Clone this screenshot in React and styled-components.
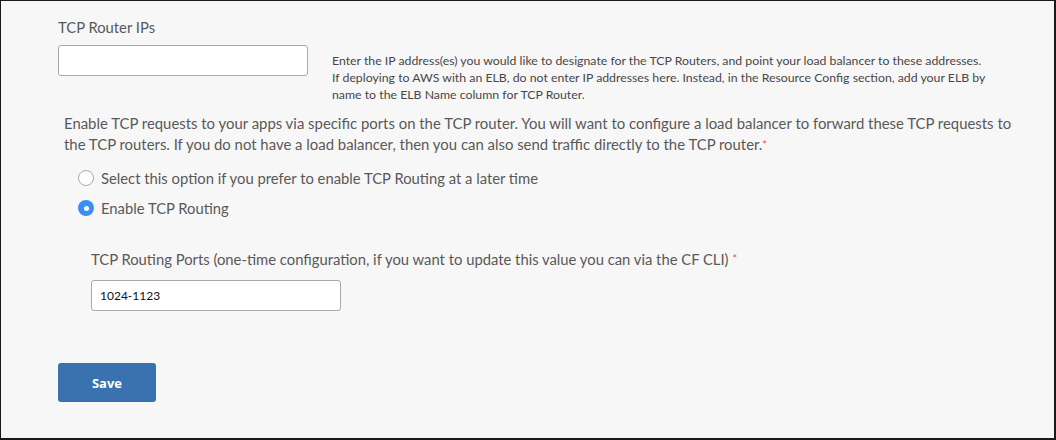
import React from 'react';
import styled, { createGlobalStyle } from 'styled-components';

const GlobalStyle = createGlobalStyle`
    html, body {
        margin: 0;
        padding: 0;
        background: #f7f7f7;
    }
    * { box-sizing: border-box; }
`;

const Frame = styled.div`
    width: 1056px;
    height: 440px;
    background: #f7f7f7;
    border-top: 1px solid #1a1a1a;
    border-left: 1px solid #1a1a1a;
    border-right: 2px solid #1a1a1a;
    border-bottom: 2px solid #1a1a1a;
    padding: 16px 0 0 57px;
    font-family: Lato, "Open Sans", sans-serif;
    color: #595959;
`;

const FieldLabel = styled.div`
    font-size: 14.8px;
    line-height: 20px;
    color: #595959;
`;

const IpRow = styled.div`
    display: flex;
    align-items: flex-start;
    margin-top: 8px;
`;

const TextInput = styled.input`
    width: ${p => p.width}px;
    height: 31px;
    border: 1px solid #a9a9a9;
    border-radius: 3px;
    background: #fff;
    padding: 0 8px;
    font-family: Lato, "Open Sans", sans-serif;
    font-size: 12px;
    color: #111;
    outline: none;
`;

const Help = styled.p`
    margin: 7px 0 0 24px;
    font-size: 12.3px;
    line-height: 17px;
    color: #474747;
    white-space: nowrap;
`;

const Intro = styled.p`
    margin: 10px 0 0 6px;
    font-size: 14.9px;
    line-height: 21px;
    color: #595959;
    white-space: nowrap;
`;

const Req = styled.span`
    color: #f24b4b;
    font-size: 11px;
    vertical-align: top;
    margin-left: ${p => p.gap || 0}px;
`;

const Options = styled.div`
    display: flex;
    flex-direction: column;
    gap: 12px;
    margin: 14px 0 0 20px;
`;

const Option = styled.label`
    display: flex;
    align-items: center;
    gap: 7px;
    font-size: 14.8px;
    line-height: 18px;
    color: #595959;
`;

const Dot = styled.span`
    width: 16px;
    height: 16px;
    border-radius: 50%;
    flex: none;
    background: ${p => (p.checked ? '#3b8ef3' : '#fff')};
    border: ${p => (p.checked ? 'none' : '1px solid #a8a8a8')};
    display: flex;
    align-items: center;
    justify-content: center;
    &::after {
        content: '';
        display: ${p => (p.checked ? 'block' : 'none')};
        width: 5px;
        height: 5px;
        border-radius: 50%;
        background: #fff;
    }
`;

const PortsBlock = styled.div`
    margin: 32px 0 0 33px;
`;

const PortsInput = styled(TextInput)`
    margin-top: 11px;
`;

const SaveButton = styled.button`
    display: block;
    margin-top: 52px;
    width: 98px;
    height: 39px;
    border: none;
    border-radius: 3px;
    background: #3a72b0;
    color: #fff;
    font-family: "Open Sans", Lato, sans-serif;
    font-weight: 700;
    font-size: 13px;
`;

const App = () => (
    <>
        <GlobalStyle />
        <Frame>
            <FieldLabel>TCP Router IPs</FieldLabel>
            <IpRow>
                <TextInput width={250} />
                <Help>
                    Enter the IP address(es) you would like to designate for the TCP Routers, and point your load balancer to these addresses.<br />
                    If deploying to AWS with an ELB, do not enter IP addresses here. Instead, in the Resource Config section, add your ELB by<br />
                    name to the ELB Name column for TCP Router.
                </Help>
            </IpRow>
            <Intro>
                Enable TCP requests to your apps via specific ports on the TCP router. You will want to configure a load balancer to forward these TCP requests to<br />
                the TCP routers. If you do not have a load balancer, then you can also send traffic directly to the TCP router.<Req>*</Req>
            </Intro>
            <Options>
                <Option><Dot />Select this option if you prefer to enable TCP Routing at a later time</Option>
                <Option><Dot checked />Enable TCP Routing</Option>
            </Options>
            <PortsBlock>
                <FieldLabel>
                    TCP Routing Ports (one-time configuration, if you want to update this value you can via the CF CLI)<Req gap={4}>*</Req>
                </FieldLabel>
                <PortsInput width={250} defaultValue="1024-1123" />
            </PortsBlock>
            <SaveButton>Save</SaveButton>
        </Frame>
    </>
);

export default App;
